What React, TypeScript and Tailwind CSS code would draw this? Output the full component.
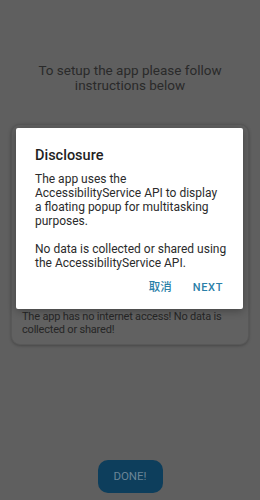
export default function App() {
  return (
    <div
      className="relative flex h-[500px] w-[260px] flex-col items-center overflow-hidden bg-[#5f5f5f]"
      style={{ fontFamily: 'Roboto, "Noto Sans CJK SC", sans-serif' }}
    >
      <h1 className="pt-[63px] text-center text-[13.5px] leading-[15px] text-[#2a2a2a]">
        To setup the app please follow
        <br />
        instructions below
      </h1>

      <div className="mt-[31px] flex h-[221px] w-[238px] flex-col justify-end rounded-[9px] border border-[#585858] bg-[#616161] px-[10px] pb-[8px] shadow-[0_1px_3px_rgba(0,0,0,0.25)]">
        <p className="whitespace-nowrap text-[11px] leading-[13px] tracking-[-0.2px] text-[#262626]">
          The app has no internet access! No data is
          <br />
          collected or shared!
        </p>
      </div>

      <button className="mt-auto mb-[7px] h-[33px] w-[65px] rounded-[10px] bg-[#0d3e5c] text-[11.5px] text-[#6b8597]">
        DONE!
      </button>

      {/* dialog */}
      <div className="absolute left-[16px] top-[128px] flex h-[181px] w-[227px] flex-col rounded-[2px] bg-white px-[19px] pt-[18px] shadow-[0_2px_8px_rgba(0,0,0,0.3)]">
        <h2 className="text-[14.5px] font-medium leading-[20px] text-[#1f1f1f]">Disclosure</h2>
        <div className="mt-[6px] whitespace-nowrap text-[12px] leading-[14px] text-[#2b2b2b]">
          <p>
            The app uses the
            <br />
            AccessibilityService API to display
            <br />
            a floating popup for multitasking
            <br />
            purposes.
          </p>
          <p className="mt-[14px]">
            No data is collected or shared using
            <br />
            the AccessibilityService API.
          </p>
        </div>
        <div className="mt-[4px] flex h-[28px] items-center justify-end gap-[21px] pr-[1px] text-[11px] font-medium text-[#2a80a8]">
          <button className="text-[11.5px]">取消</button>
          <button className="tracking-[0.06em]">NEXT</button>
        </div>
      </div>
    </div>
  );
}
